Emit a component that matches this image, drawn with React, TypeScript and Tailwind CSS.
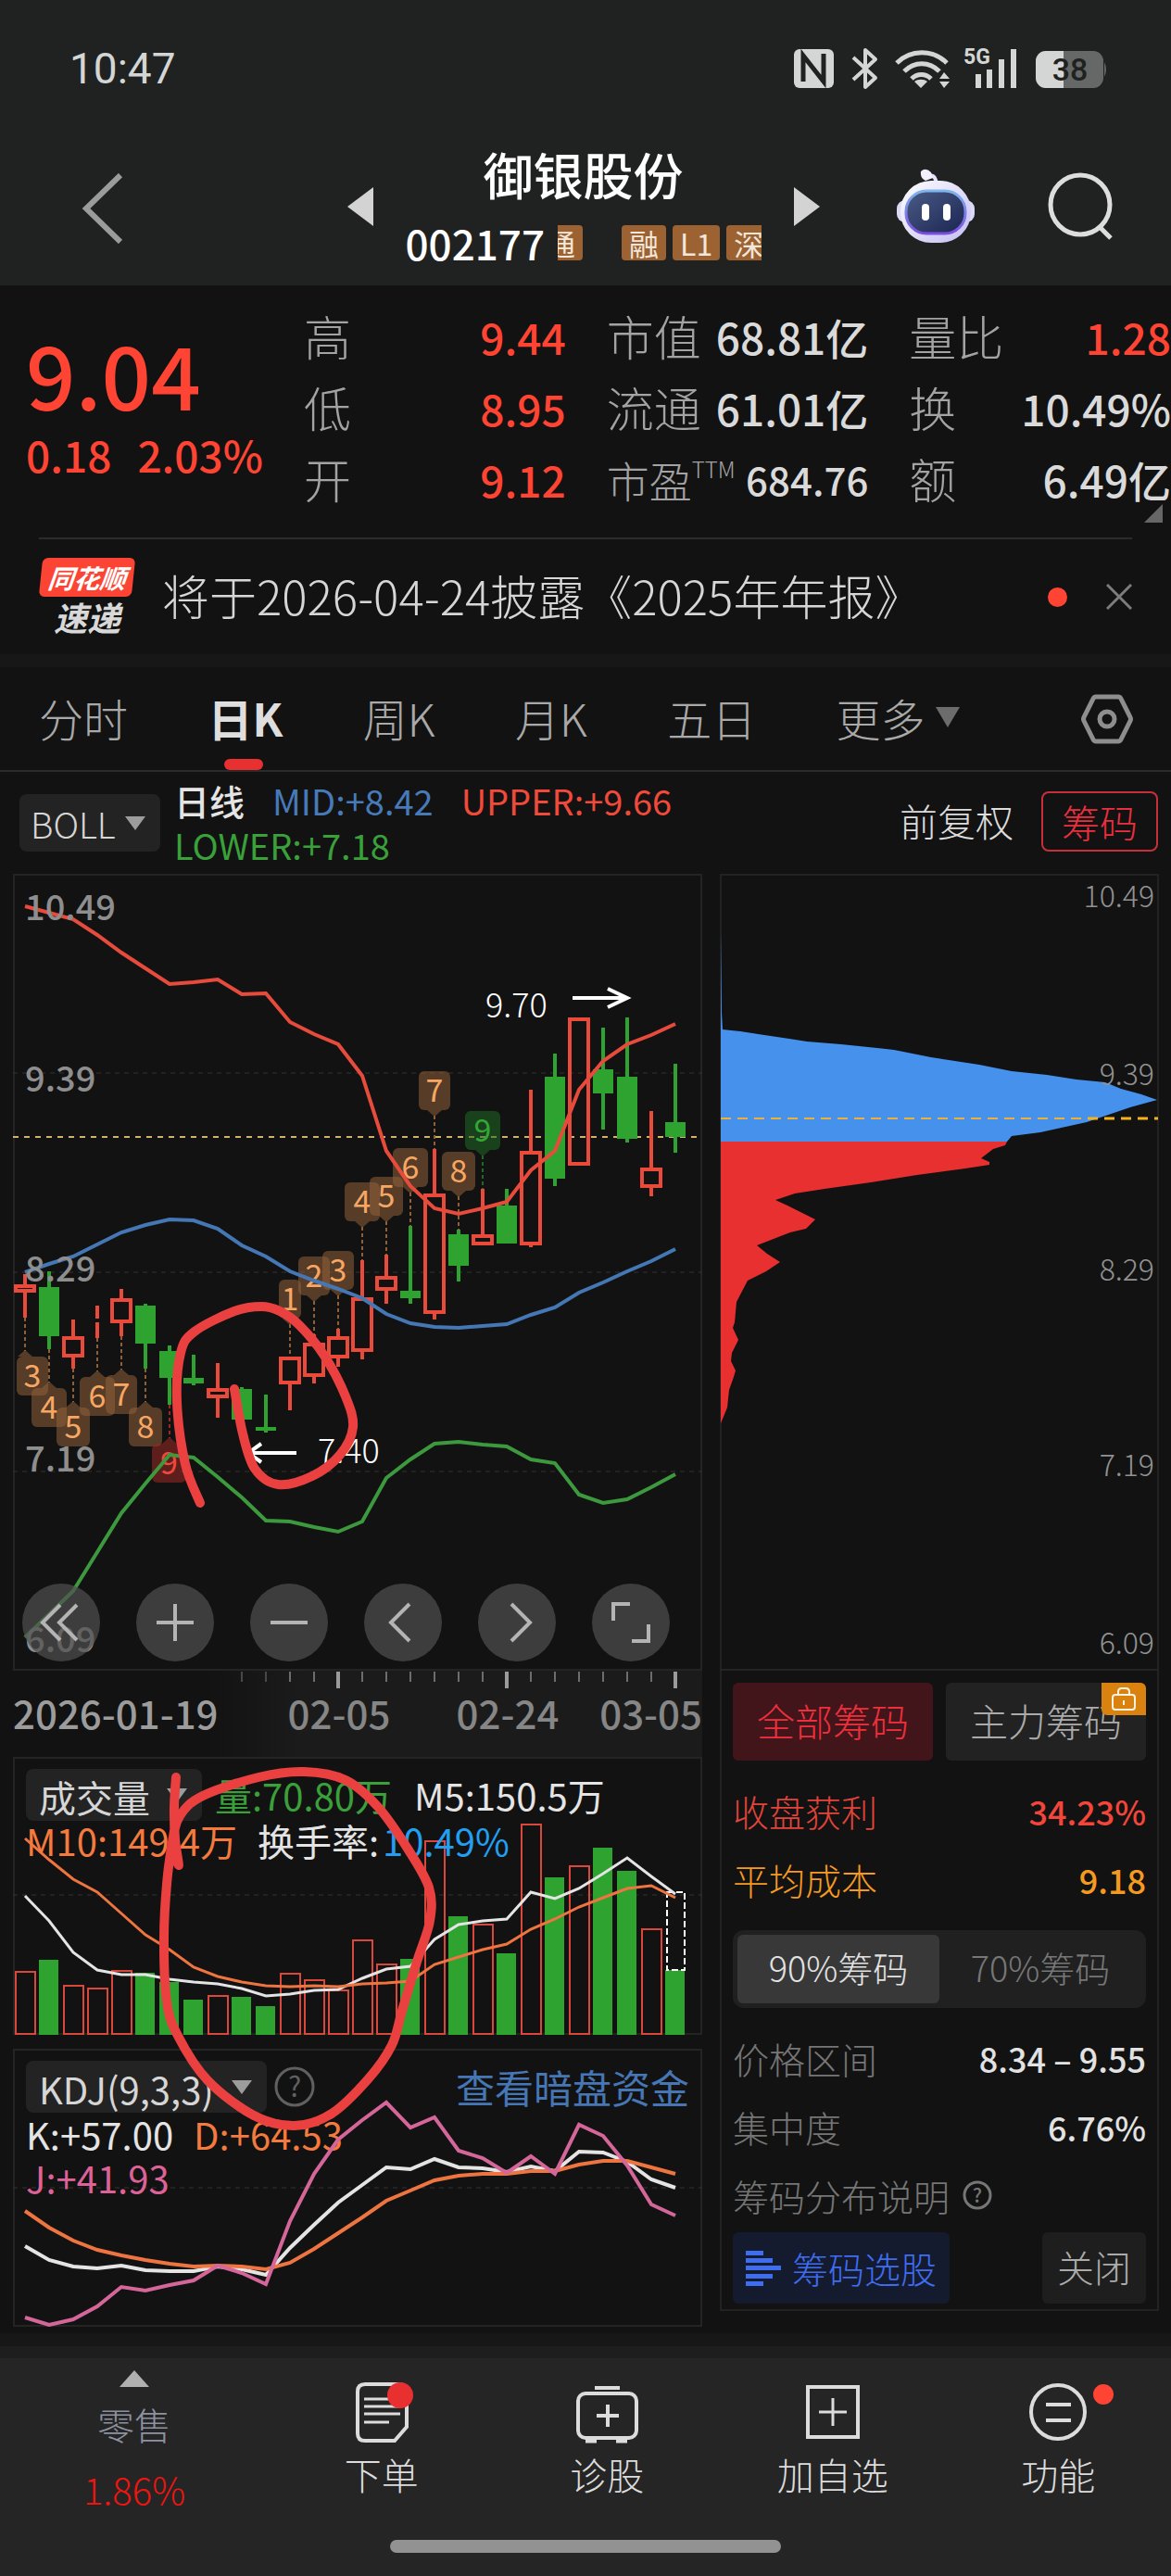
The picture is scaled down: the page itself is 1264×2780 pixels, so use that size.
import React from "react";

type Candle = [up: boolean, high: number, top: number, bottom: number, low: number];

const x0 = 27;
const step = 26;
const cx = (i: number) => x0 + i * step;

const UP = "#ea4a3a";
const DOWN = "#2fa32f";

const candles: Candle[] = [
  [true, 1375, 1386, 1395, 1422],
  [false, 1372, 1389, 1442, 1456],
  [true, 1424, 1442, 1465, 1477],
  [true, 1409, 1423, 1427, 1444],
  [true, 1391, 1401, 1428, 1442],
  [false, 1407, 1409, 1450, 1477],
  [false, 1452, 1458, 1487, 1516],
  [false, 1462, 1487, 1493, 1495],
  [true, 1471, 1498, 1509, 1530],
  [false, 1497, 1499, 1532, 1532],
  [false, 1505, 1540, 1544, 1546],
  [true, 1464, 1464, 1494, 1522],
  [true, 1440, 1449, 1486, 1493],
  [true, 1434, 1442, 1466, 1475],
  [true, 1360, 1400, 1459, 1467],
  [true, 1354, 1377, 1393, 1407],
  [false, 1323, 1393, 1401, 1407],
  [true, 1240, 1288, 1418, 1424],
  [false, 1327, 1332, 1366, 1383],
  [true, 1283, 1332, 1344, 1344],
  [false, 1283, 1301, 1342, 1342],
  [true, 1176, 1242, 1344, 1346],
  [false, 1137, 1162, 1272, 1280],
  [true, 1098, 1098, 1258, 1258],
  [false, 1109, 1154, 1180, 1219],
  [false, 1098, 1162, 1229, 1233],
  [true, 1199, 1260, 1282, 1291],
  [false, 1148, 1211, 1227, 1244],
];

const upper = [978, 985, 992, 1009, 1028, 1045, 1062, 1060, 1057, 1073, 1072, 1103, 1116, 1127, 1161, 1242, 1280, 1304, 1310, 1304, 1297, 1263, 1242, 1176, 1145, 1127, 1117, 1105];
const mid = [1373, 1364, 1356, 1343, 1330, 1322, 1316, 1317, 1326, 1344, 1356, 1372, 1382, 1391, 1401, 1418, 1428, 1432, 1433, 1431, 1429, 1419, 1411, 1395, 1384, 1372, 1361, 1348];
const lower = [1767, 1742, 1717, 1675, 1633, 1601, 1570, 1573, 1594, 1616, 1641, 1642, 1648, 1653, 1642, 1595, 1575, 1558, 1556, 1559, 1561, 1575, 1579, 1613, 1622, 1618, 1605, 1591];

const volumeTops = [2127, 2115, 2142, 2145, 2126, 2129, 2139, 2158, 2153, 2155, 2165, 2129, 2136, 2147, 2093, 2119, 2114, 1986, 2068, 2076, 2108, 1968, 2026, 2013, 1994, 2019, 2081, 2126];
const ma5 = [2046, 2073, 2107, 2126, 2131, 2131, 2136, 2139, 2141, 2146, 2154, 2152, 2148, 2147, 2135, 2125, 2122, 2093, 2077, 2073, 2071, 2042, 2049, 2038, 2022, 2005, 2025, 2044];
const ma10 = [1984, 2007, 2028, 2042, 2065, 2088, 2104, 2123, 2133, 2139, 2143, 2144, 2143, 2144, 2141, 2140, 2138, 2120, 2112, 2104, 2098, 2082, 2071, 2058, 2048, 2038, 2035, 2048];

const lineK = [2424, 2439, 2446, 2448, 2445, 2450, 2451, 2451, 2446, 2449, 2455, 2426, 2401, 2377, 2358, 2339, 2341, 2330, 2339, 2340, 2344, 2338, 2343, 2322, 2323, 2333, 2352, 2361];
const lineD = [2386, 2404, 2418, 2428, 2434, 2439, 2443, 2446, 2445, 2446, 2449, 2442, 2427, 2410, 2393, 2375, 2364, 2353, 2348, 2346, 2346, 2343, 2343, 2336, 2332, 2332, 2339, 2346];
const lineJ = [2501, 2509, 2503, 2489, 2468, 2472, 2466, 2461, 2445, 2453, 2465, 2397, 2346, 2309, 2288, 2269, 2296, 2285, 2321, 2329, 2345, 2327, 2346, 2293, 2305, 2337, 2379, 2391];

const BROWN = { fill: "#8f6038", ink: "#f7a763" };
const GREEN = { fill: "#1f6a24", ink: "#33a636" };
const RED = { fill: "#9a2824", ink: "#f0483a" };

const topTags = [
  { n: 1, i: 11, l: 301, r: 325, y: 1381, c: BROWN },
  { n: 2, i: 12, l: 322, r: 356, y: 1356, c: BROWN },
  { n: 3, i: 13, l: 348, r: 382, y: 1350, c: BROWN },
  { n: 4, i: 14, l: 372, r: 410, y: 1276, c: BROWN },
  { n: 5, i: 15, l: 399, r: 435, y: 1270, c: BROWN },
  { n: 6, i: 16, l: 424, r: 462, y: 1239, c: BROWN },
  { n: 7, i: 17, l: 452, r: 486, y: 1156, c: BROWN },
  { n: 8, i: 18, l: 477, r: 513, y: 1243, c: BROWN },
  { n: 9, i: 19, l: 502, r: 540, y: 1199, c: GREEN },
];

const bottomTags = [
  { n: 3, i: 0, l: 18, r: 52, y: 1464, c: BROWN },
  { n: 4, i: 1, l: 34, r: 72, y: 1498, c: BROWN },
  { n: 5, i: 2, l: 61, r: 97, y: 1519, c: BROWN },
  { n: 6, i: 3, l: 86, r: 124, y: 1486, c: BROWN },
  { n: 7, i: 4, l: 114, r: 148, y: 1484, c: BROWN },
  { n: 8, i: 5, l: 139, r: 175, y: 1519, c: BROWN },
  { n: 9, i: 6, l: 164, r: 201, y: 1558, c: RED },
];

type Pt = [number, number];

const smallLoop: Pt[] = [[253, 1499], [262, 1547], [275, 1585], [300, 1602], [337, 1593], [367, 1570], [381, 1540], [373, 1507], [350, 1463], [323, 1430], [302, 1415], [282, 1410], [253, 1415], [210, 1437], [195, 1460], [191, 1513], [200, 1580], [216, 1622]];
const bigLoop: Pt[] = [[190, 1918], [188, 1950], [189, 1985], [193, 2013], [187, 1990], [194, 1960], [219, 1938], [279, 1918], [328, 1912], [373, 1921], [408, 1950], [440, 1995], [463, 2037], [464, 2073], [450, 2117], [434, 2170], [423, 2207], [398, 2243], [358, 2281], [318, 2294], [274, 2283], [224, 2245], [192, 2197], [180, 2160], [177, 2090], [181, 2023], [189, 1970]];

function smooth(pts: Pt[]) {
  let d = `M${pts[0][0]} ${pts[0][1]}`;
  for (let i = 0; i < pts.length - 1; i++) {
    const a = pts[Math.max(0, i - 1)];
    const b = pts[i];
    const c = pts[i + 1];
    const e = pts[Math.min(pts.length - 1, i + 2)];
    d += ` C${b[0] + (c[0] - a[0]) / 6} ${b[1] + (c[1] - a[1]) / 6} ${c[0] - (e[0] - b[0]) / 6} ${c[1] - (e[1] - b[1]) / 6} ${c[0]} ${c[1]}`;
  }
  return d;
}

function Line({ ys, color, width = 4 }: { ys: number[]; color: string; width?: number }) {
  return <polyline points={ys.map((y, i) => `${cx(i)},${y}`).join(" ")} fill="none" stroke={color} strokeWidth={width} />;
}

function Grid({ y }: { y: number }) {
  return <line x1="14" x2="758" y1={y} y2={y} stroke="#333" strokeWidth="1" strokeDasharray="5 5" />;
}

function Caret({ className = "" }: { className?: string }) {
  return (
    <svg viewBox="0 0 22 15" className={`h-[15px] w-[22px] ${className}`} aria-hidden="true">
      <path d="M0 0h22L11 15z" fill="#9c9c9c" />
    </svg>
  );
}

function Picker({ label, options, className }: { label: string; options: string[]; className: string }) {
  return (
    <div className="relative flex shrink-0 items-center">
      <select aria-label={label} className={`appearance-none rounded-lg bg-[#232323] pr-10 text-[#d6d6d6] ${className}`}>
        {options.map((o) => (
          <option key={o}>{o}</option>
        ))}
      </select>
      <Caret className="pointer-events-none absolute right-4" />
    </div>
  );
}

function StatusBar() {
  return (
    <div className="flex h-[146px] items-center justify-between pt-[2px] pr-[66px] pl-[75px] text-[#d4d6d5]">
      <span className="font-[Roboto] text-[46px] leading-none">10:47</span>
      <svg viewBox="850 48 345 52" className="h-[52px] w-[345px]" role="img" aria-label="NFC 蓝牙 Wi-Fi 5G 电量38">
        <rect x="854" y="53" width="43" height="42" rx="6" fill="#d4d6d5" />
        <path d="M864 88V60l22 28V58" fill="none" stroke="#202221" strokeWidth="5" />
        <path d="M918 62l24 22-11 10V54l11 10-24 22" fill="none" stroke="#d4d6d5" strokeWidth="4" strokeLinejoin="round" />
        <g fill="none" stroke="#d4d6d5" strokeWidth="5">
          <path d="M965 68c15-15 39-15 54 0" />
          <path d="M973 77c11-11 27-11 38 0" />
          <path d="M981 85c6-6 15-6 21 0" />
        </g>
        <path d="M984 88c4-3 10-3 14 0l-7 7z" fill="#d4d6d5" />
        <path d="M1011 85l5-7 6 7zM1011 88l5 7 6-7z" fill="#d4d6d5" />
        <text x="1037" y="69" fontFamily="Roboto" fontWeight="700" fontSize="23" fill="#d4d6d5">5G</text>
        <path d="M1050 80h6v15h-6zM1062 75h6v20h-6zM1075 64h6v31h-6zM1088 53h6v42h-6z" fill="#d4d6d5" />
        <clipPath id="batt">
          <rect x="1115" y="55" width="73" height="40" rx="11" />
        </clipPath>
        <g clipPath="url(#batt)">
          <rect x="1115" y="55" width="73" height="40" fill="#666867" />
          <rect x="1115" y="55" width="30" height="40" fill="#d4d6d5" />
        </g>
        <path d="M1189 67q4 8 0 16z" fill="#666867" />
        <text x="1152" y="87" textAnchor="middle" fontFamily="Roboto" fontWeight="500" fontSize="34" fill="#202221">38</text>
      </svg>
    </div>
  );
}

function Robot() {
  return (
    <svg viewBox="0 0 88 82" className="h-[82px] w-[88px]" aria-hidden="true">
      <defs>
        <linearGradient id="shell" x1="0" y1="0" x2="1" y2="1">
          <stop offset="0" stopColor="#ffffff" />
          <stop offset="1" stopColor="#c3bdf2" />
        </linearGradient>
        <linearGradient id="visor" x1="0" y1="0" x2="1" y2="1">
          <stop offset="0" stopColor="#4a5c86" />
          <stop offset="1" stopColor="#1b2450" />
        </linearGradient>
        <linearGradient id="rim" x1="0" y1="0" x2="0" y2="1">
          <stop offset="0" stopColor="#7fb6ee" />
          <stop offset="1" stopColor="#7a4de0" />
        </linearGradient>
      </defs>
      <path d="M44 16q1-8-6-9" fill="none" stroke="#e4e2fa" strokeWidth="4" />
      <path d="M28 3q5-5 11 1l2 6-8 3q-6-3-5-10z" fill="#f1f0fc" />
      <rect x="2" y="34" width="84" height="24" rx="9" fill="#dcd9f7" />
      <rect x="6" y="13" width="76" height="67" rx="33" fill="url(#shell)" />
      <rect x="12" y="24" width="64" height="46" rx="22" fill="url(#visor)" stroke="url(#rim)" strokeWidth="3" />
      <rect x="29" y="38" width="8" height="18" rx="4" fill="#fff" />
      <rect x="52" y="38" width="8" height="18" rx="4" fill="#fff" />
    </svg>
  );
}

function Badge({ children }: { children: React.ReactNode }) {
  return <span className="flex h-[38px] shrink-0 items-center justify-center rounded-sm bg-[#9c6232] px-2 text-[32px] leading-none text-[#f3e6da]">{children}</span>;
}

function Header() {
  return (
    <header className="bg-[#202221]">
      <StatusBar />
      <div className="flex h-[162px] items-start pr-[60px] pl-[88px]">
        <button aria-label="返回" className="mt-[41px]">
          <svg viewBox="0 0 46 76" className="h-[76px] w-[46px]">
            <path d="M42 2L5 38l37 36" fill="none" stroke="#9a9b9a" strokeWidth="6" />
          </svg>
        </button>
        <div className="flex flex-1 items-center justify-center pl-[160px] pr-[1px]">
          <button aria-label="上一只">
            <svg viewBox="0 0 28 42" className="h-[42px] w-7"><path d="M28 0v42L0 21z" fill="#d2d3d2" /></svg>
          </button>
          <div className="flex w-[454px] flex-col items-center pt-[6px]">
            <h1 className="text-[54px] leading-[72px] font-medium text-white">御银股份</h1>
            <div className="flex w-[384px] items-center gap-[14px]">
              <span className="text-[44px] leading-[76px] font-medium text-white">002177</span>
              <div className="flex min-w-0 flex-1 items-center overflow-hidden">
                <div className="flex w-[27px] shrink-0 justify-end overflow-hidden"><Badge>通</Badge></div>
                <div className="ml-[42px] flex min-w-0 flex-1 gap-[7px] overflow-hidden">
                  <Badge>融</Badge>
                  <Badge>L1</Badge>
                  <Badge>深</Badge>
                </div>
              </div>
            </div>
          </div>
          <button aria-label="下一只">
            <svg viewBox="0 0 28 42" className="h-[42px] w-7"><path d="M0 0v42l28-21z" fill="#d2d3d2" /></svg>
          </button>
        </div>
        <div className="mt-[36px] flex items-center gap-[76px]">
          <button aria-label="智能助手"><Robot /></button>
          <button aria-label="搜索">
            <svg viewBox="0 0 74 76" className="h-[76px] w-[74px]">
              <circle cx="36" cy="36" r="32" fill="none" stroke="#dcdddc" strokeWidth="5" />
              <path d="M57 60l12 12" stroke="#dcdddc" strokeWidth="5" />
            </svg>
          </button>
        </div>
      </div>
    </header>
  );
}

function Stat({ label, value, red = false, small = false }: { label: React.ReactNode; value: string; red?: boolean; small?: boolean }) {
  return (
    <div className="flex h-[77px] items-center justify-between whitespace-nowrap">
      <dt className="text-[51px] leading-none font-light text-[#a3a3a3]">{label}</dt>
      <dd className={`leading-none font-medium ${small ? "text-[42px]" : "text-[46px]"} ${red ? "text-[#ff4433]" : "text-[#dadada]"}`}>{value}</dd>
    </div>
  );
}

function Quote() {
  return (
    <section className="relative grid grid-cols-[256px_1fr_1fr_1fr] gap-x-11 pt-4 pb-[25px] pl-[28px]">
      <div className="pt-[30px] font-medium whitespace-nowrap text-[#ff4433]">
        <div className="text-[94px] leading-[96px]">9.04</div>
        <div className="flex gap-7 pt-[17px] text-[46px] leading-[46px]">
          <span>0.18</span>
          <span>2.03%</span>
        </div>
      </div>
      <dl>
        <Stat label="高" value="9.44" red />
        <Stat label="低" value="8.95" red />
        <Stat label="开" value="9.12" red />
      </dl>
      <dl>
        <Stat label="市值" value="68.81亿" />
        <Stat label="流通" value="61.01亿" />
        <Stat label={<span className="flex items-start text-[46px]">市盈<span className="text-[24px] leading-none">TTM</span></span>} value="684.76" small />
      </dl>
      <dl>
        <Stat label="量比" value="1.28" red />
        <Stat label="换" value="10.49%" />
        <Stat label="额" value="6.49亿" />
      </dl>
      <svg viewBox="0 0 20 20" className="absolute right-[9px] bottom-[16px] size-5" aria-hidden="true"><path d="M20 0v20H0z" fill="#666" /></svg>
    </section>
  );
}

function News() {
  return (
    <section className="mx-[42px] flex h-[126px] items-center border-t-2 border-[#2b2b2b]">
      <div className="flex w-[104px] flex-col items-center italic">
        <div className="-skew-x-6 rounded-md bg-[#fb4434] px-2 text-[28px] leading-[42px] font-bold text-white">同花顺</div>
        <div className="text-[36px] leading-[42px] font-bold text-[#d8d8d8]">速递</div>
      </div>
      <a href="#report" className="flex-1 pb-1 pl-[29px] text-[51px] leading-none font-light whitespace-nowrap text-[#d6d6d6]">将于2026-04-24披露《2025年年报》</a>
      <span className="mr-[42px] size-[21px] rounded-full bg-[#ff4433]" />
      <button aria-label="关闭公告">
        <svg viewBox="0 0 28 28" className="size-7"><path d="M1 1l26 26M27 1L1 27" stroke="#7c7c7c" strokeWidth="3" /></svg>
      </button>
    </section>
  );
}

function Tabs() {
  const tab = "relative flex h-full items-center pb-1";
  return (
    <nav className="flex h-[113px] items-center justify-between border-b-2 border-[#2b2b2b] pr-[40px] pl-[42px] text-[48px] leading-none font-light text-[#a9a9a9]">
      <button className={tab}>分时</button>
      <button className={`${tab} font-bold text-[#dedede]`}>
        日K
        <span className="absolute bottom-0 left-[18px] h-3 w-[42px] rounded-full bg-[#e83030]" />
      </button>
      <button className={tab}>周K</button>
      <button className={tab}>月K</button>
      <button className={tab}>五日</button>
      <button className={`${tab} gap-[11px]`}>
        更多
        <svg viewBox="0 0 26 22" className="h-[22px] w-[26px]"><path d="M0 0h26L13 22z" fill="#6c6c6c" /></svg>
      </button>
      <button aria-label="设置" className="ml-[44px]">
        <svg viewBox="0 0 58 56" className="h-14 w-[58px]" fill="none" stroke="#8e8e8e" strokeWidth="5">
          <path d="M17 4h24q2 0 3 2l10 20q1 2 0 4L44 50q-1 2-3 2H17q-2 0-3-2L4 30q-1-2 0-4L14 6q1-2 3-2z" />
          <circle cx="29" cy="28" r="8" />
        </svg>
      </button>
    </nav>
  );
}

function IndicatorBar() {
  return (
    <div className="flex h-[110px] items-center pr-[14px] pl-[21px] text-[38px]">
      <Picker label="主图指标" options={["BOLL", "MA"]} className="h-[62px] w-[152px] pl-3 text-[38px] font-light" />
      <div className="flex flex-1 flex-wrap content-center gap-x-[30px] pr-[200px] pl-[15px] leading-[48px]">
        <span className="font-medium text-[#e4e4e4]">日线</span>
        <span className="text-[#477ab8]">MID:+8.42</span>
        <span className="text-[#f04a3a]">UPPER:+9.66</span>
        <span className="text-[#3aa03a]">LOWER:+7.18</span>
      </div>
      <button className="pr-[30px] pb-1 text-[41px] font-light whitespace-nowrap text-[#dcdcdc]">前复权</button>
      <button className="mb-1 h-[65px] rounded-lg border-2 border-[#c92f3a] px-5 text-[41px] leading-none font-light whitespace-nowrap text-[#ea2f3e]">筹码</button>
    </div>
  );
}

function Tag({ n, i, l, r, y, c, up }: { n: number; i: number; l: number; r: number; y: number; c: { fill: string; ink: string }; up: boolean }) {
  const x = cx(i);
  const [, high, , , low] = candles[i];
  return (
    <g>
      <path
        d={up ? `M${x} ${y + 48}V${high}` : `M${x} ${low}V${y - 6}`}
        stroke={c.fill}
        strokeWidth="2"
        strokeDasharray="4 3"
      />
      <rect x={l} y={y} width={r - l} height="42" rx="6" fill={c.fill} fillOpacity="0.55" />
      <path d={up ? `M${x - 8} ${y + 42}h16l-8 7z` : `M${x - 8} ${y}h16l-8 -7z`} fill={c.fill} fillOpacity="0.55" />
      <text x={(l + r) / 2} y={y + 33} textAnchor="middle" fontSize="34" fill={c.ink}>{n}</text>
    </g>
  );
}

function RoundButton({ label, d }: { label: string; d: string }) {
  return (
    <button aria-label={label} className="size-[84px] rounded-full bg-[#505050]/70">
      <svg viewBox="0 0 84 84" className="size-full"><path d={d} fill="none" stroke="#b4b4b4" strokeWidth="4" /></svg>
    </button>
  );
}

function PriceChart() {
  return (
    <div className="relative">
      <svg viewBox="14 943 744 860" className="block w-full" role="img" aria-label="日K线与布林线">
        <rect x="15" y="944" width="742" height="858" fill="none" stroke="#242424" strokeWidth="2" />
        <Grid y={1158} />
        <Grid y={1373} />
        <Grid y={1588} />
        <line x1="14" x2="758" y1="1227" y2="1227" stroke="#d3b06c" strokeWidth="2" strokeDasharray="6 6" />
        {candles.map(([isUp, high, top, bottom, low], i) =>
          isUp ? (
            <g key={i} stroke={UP} strokeWidth="4" fill="none">
              <path d={`M${cx(i)} ${high}V${top}M${cx(i)} ${bottom}V${low}`} />
              <rect x={cx(i) - 10} y={top + 2} width="20" height={Math.max(0, bottom - top - 4)} />
            </g>
          ) : (
            <g key={i} fill={DOWN}>
              <rect x={cx(i) - 2} y={high} width="4" height={low - high} />
              <rect x={cx(i) - 11} y={top} width="22" height={bottom - top} />
            </g>
          ),
        )}
        {topTags.map((t) => <Tag key={t.n} {...t} up />)}
        {bottomTags.map((t) => <Tag key={t.n} {...t} up={false} />)}
        <Line ys={upper} color="#e64b3c" />
        <Line ys={mid} color="#4477b3" />
        <Line ys={lower} color="#3d993d" />
        <g fontSize="38" fontWeight="500" fill="#8e8e8e">
          <text x="27" y="993">10.49</text>
          <text x="27" y="1178">9.39</text>
          <text x="27" y="1383">8.29</text>
          <text x="27" y="1588">7.19</text>
          <text x="27" y="1783">6.09</text>
        </g>
        <g fontSize="36" fontWeight="300" fill="#fff">
          <text x="524" y="1098">9.70</text>
          <text x="343" y="1579">7.40</text>
        </g>
        <path d="M618 1077h57M656 1067l21 10-21 10M320 1568h-51M282 1558l-14 10 14 10" fill="none" stroke="#fff" strokeWidth="4" />
      </svg>
      <div className="absolute inset-x-0 bottom-[10px] flex gap-[39px] pl-[10px]">
        <RoundButton label="最早" d="M41 23L22 42l19 19M59 23L40 42l19 19" />
        <RoundButton label="放大" d="M42 22v40M22 42h40" />
        <RoundButton label="缩小" d="M22 42h40" />
        <RoundButton label="前移" d="M49 22L29 42l20 20" />
        <RoundButton label="后移" d="M36 22l20 20-20 20" />
        <RoundButton label="全屏" d="M23 40V22h18M61 44v18H43" />
      </div>
    </div>
  );
}

function DateAxis() {
  return (
    <svg viewBox="14 1803 744 93" className="block w-full" role="img" aria-label="日期轴">
      <defs>
        <linearGradient id="fade" x1="0" x2="1">
          <stop offset="28%" stopColor="#121212" />
          <stop offset="42%" stopColor="#1b1b1b" />
        </linearGradient>
      </defs>
      <rect x="14" y="1803" width="744" height="93" fill="url(#fade)" />
      {Array.from({ length: 19 }, (_, k) => k + 9).map((i) => {
        const big = i % 7 === 6;
        return <rect key={i} x={cx(i) - (big ? 2 : 1)} y="1804" width={big ? 4 : 2} height={big ? 18 : 11} fill={big ? "#9a9a9a" : i < 11 ? "#484848" : "#6c6c6c"} />;
      })}
      <g fontSize="42" fontWeight="500" fill="#868686">
        <text x="14" y="1866" fill="#9c9c9c">2026-01-19</text>
        <text x="366" y="1866" textAnchor="middle">02-05</text>
        <text x="548" y="1866" textAnchor="middle">02-24</text>
        <text x="758" y="1866" textAnchor="end">03-05</text>
      </g>
    </svg>
  );
}

function VolumeChart() {
  const base = 2196;
  return (
    <div className="relative">
      <svg viewBox="14 1896 744 300" className="block w-full" role="img" aria-label="成交量">
        <rect x="15" y="1897" width="742" height="298" fill="none" stroke="#242424" strokeWidth="2" />
        <Grid y={2045} />
        {volumeTops.map((y, i) =>
          candles[i][0] ? (
            <rect key={i} x={cx(i) - 10} y={y + 1} width="21" height={base - y - 2} fill="none" stroke="#d9483a" strokeWidth="2" />
          ) : (
            <rect key={i} x={cx(i) - 11} y={y} width="21" height={base - y} fill={DOWN} />
          ),
        )}
        <rect x="720" y="2042" width="19" height="84" fill="none" stroke="#fff" strokeWidth="2" strokeDasharray="7 3" />
        <Line ys={ma5} color="#e4e4e4" width={3} />
        <Line ys={ma10} color="#ee7440" width={3} />
      </svg>
      <div className="absolute inset-x-0 top-[13px] px-[14px] text-[40px]">
        <div className="flex h-14 items-center gap-[14px]">
          <Picker label="副图指标一" options={["成交量", "成交额"]} className="h-14 w-[190px] pl-[14px]" />
          <div className="flex gap-[24px] leading-none">
            <span className="text-[#3aa03a]">量:70.80万</span>
            <span className="text-[#e4e4e4]">M5:150.5万</span>
          </div>
        </div>
        <div className="flex gap-[22px] leading-[42px]">
          <span className="text-[#f47a3e]">M10:149.4万</span>
          <span className="text-[#e4e4e4]">换手率:<span className="pl-1 text-[#229ff0]">10.49%</span></span>
        </div>
      </div>
    </div>
  );
}

function KdjChart() {
  return (
    <div className="relative mt-[15px]">
      <svg viewBox="14 2211 744 300" className="block w-full" role="img" aria-label="KDJ">
        <rect x="15" y="2212" width="742" height="298" fill="none" stroke="#242424" strokeWidth="2" />
        <Grid y={2361} />
      </svg>
      <div className="absolute inset-x-0 top-[13px] px-[14px] text-[40px]">
        <div className="flex h-14 items-center">
          <Picker label="副图指标二" options={["KDJ(9,3,3)", "MACD(12,26,9)"]} className="h-14 w-[260px] pl-[14px]" />
          <button aria-label="指标说明" className="ml-2">
            <svg viewBox="0 0 44 44" className="size-11">
              <circle cx="22" cy="22" r="20" fill="none" stroke="#606060" strokeWidth="3" />
              <text x="22" y="33" textAnchor="middle" fontSize="30" fill="#606060">?</text>
            </svg>
          </button>
          <a href="#funds" className="ml-auto text-[42px] leading-none text-[#4676b4]">查看暗盘资金</a>
        </div>
        <div className="flex flex-wrap gap-x-[22px] pr-[340px] leading-[47px] whitespace-nowrap">
          <span className="text-[#e4e4e4]">K:+57.00</span>
          <span className="text-[#f47a3e]">D:+64.53</span>
          <span className="text-[#dd6298]">J:+41.93</span>
        </div>
      </div>
      <svg viewBox="14 2211 744 300" className="pointer-events-none absolute inset-0 w-full" aria-hidden="true">
        <Line ys={lineK} color="#e4e4e4" />
        <Line ys={lineD} color="#ee7440" />
        <Line ys={lineJ} color="#d4669a" />
      </svg>
    </div>
  );
}

function Ink() {
  return (
    <svg viewBox="14 943 744 1568" className="pointer-events-none absolute inset-x-0 top-0 w-full" aria-hidden="true">
      <g fill="none" stroke="#ea4040" strokeWidth="10" strokeLinecap="round" strokeLinejoin="round">
        <path d={smooth(smallLoop)} />
        <path d={smooth(bigLoop)} />
      </g>
    </svg>
  );
}

function ChipProfile() {
  return (
    <svg viewBox="777 943 474 860" className="block w-full" role="img" aria-label="筹码分布">
      <path d="M777 1802h474" stroke="#242424" strokeWidth="2" />
      <path d="M778 1005L779 1093L780 1111L799 1113L825 1117L852 1121L871 1124L908 1127L947 1131L965 1133L1005 1141L1057 1149L1092 1156L1130 1160L1162 1165L1193 1168L1210 1175L1232 1181L1249 1187L1220 1195L1173 1211L1123 1222L1092 1226L1087 1232H778z" fill="#4691ec" />
      <path d="M778 1232H1087L1085 1236L1072 1240L1059 1250L1068 1254L1068 1257L1042 1261L990 1268L940 1276L890 1283L858 1288L837 1295L850 1301L880 1316L870 1326L853 1330L817 1344L828 1353L842 1362L827 1372L807 1382L795 1405L793 1427L791 1433L797 1446L790 1460L789 1469L794 1479L792 1486L787 1500L785 1519L778 1536z" fill="#e83030" />
      <g fontSize="32" fontWeight="300" fill="#929292" textAnchor="end">
        <text x="1246" y="979">10.49</text>
        <text x="1246" y="1171">9.39</text>
        <text x="1246" y="1382">8.29</text>
        <text x="1246" y="1593">7.19</text>
        <text x="1246" y="1785">6.09</text>
      </g>
      <path d="M778 1207h396" stroke="#e9b13c" strokeWidth="2" strokeDasharray="11 7" />
      <path d="M1174 1207h76" stroke="#f5b41e" strokeWidth="3" strokeDasharray="11 7" />
    </svg>
  );
}

function InfoRow({ label, value, tone, valueTone }: { label: string; value: string; tone: string; valueTone: string }) {
  return (
    <div className="flex h-[74px] items-center justify-between whitespace-nowrap">
      <dt className={`text-[39px] leading-none font-light ${tone}`}>{label}</dt>
      <dd className={`text-[36px] leading-none font-medium ${valueTone}`}>{value}</dd>
    </div>
  );
}

function ChipPanel() {
  return (
    <aside className="flex min-w-0 flex-[470] flex-col self-start border-2 border-[#222]">
      <div className="-mx-[2px] -mt-[2px]">
        <ChipProfile />
      </div>
      <div className="px-[12px] pt-[13px] pb-[6px]">
        <div className="flex gap-[14px] text-[41px] leading-none font-light">
          <button className="h-[84px] flex-1 rounded-md bg-[#42151a] pb-1 whitespace-nowrap text-[#ee2f3c]">全部筹码</button>
          <button className="relative h-[84px] flex-1 overflow-hidden rounded-md bg-[#222] pb-1 whitespace-nowrap text-[#ababab]">
            主力筹码
            <span className="absolute top-0 right-0 flex h-[35px] w-12 items-center justify-center rounded-bl-md bg-[#d9820f]">
              <svg viewBox="0 0 28 28" className="size-7" fill="none" stroke="#fff3df" strokeWidth="2" aria-hidden="true">
                <rect x="2" y="9" width="24" height="16" rx="3" />
                <path d="M8 9V6q0-4 4-4h4q4 0 4 4v3M14 15v5" />
              </svg>
            </span>
          </button>
        </div>
        <dl className="pt-[17px]">
          <InfoRow label="收盘获利" value="34.23%" tone="text-[#e0443a]" valueTone="text-[#f2463a]" />
          <InfoRow label="平均成本" value="9.18" tone="text-[#f59a20]" valueTone="text-[#f59a20]" />
        </dl>
        <div className="mt-[18px] flex h-[84px] rounded-xl bg-[#202020] p-[5px] text-[38px] leading-none font-light">
          <button className="flex-1 rounded-md bg-[#383838] pb-1 whitespace-nowrap text-[#e2e2e2]">90%筹码</button>
          <button className="flex-1 pb-1 whitespace-nowrap text-[#777]">70%筹码</button>
        </div>
        <dl className="pt-[17px]">
          <InfoRow label="价格区间" value="8.34 – 9.55" tone="text-[#767676]" valueTone="text-[#e2e2e2]" />
          <InfoRow label="集中度" value="6.76%" tone="text-[#767676]" valueTone="text-[#e2e2e2]" />
        </dl>
        <button className="flex h-[74px] items-center gap-[14px] text-[39px] leading-none font-light whitespace-nowrap text-[#767676]">
          筹码分布说明
          <svg viewBox="0 0 32 32" className="size-8" aria-hidden="true">
            <circle cx="16" cy="16" r="14" fill="none" stroke="#767676" strokeWidth="3" />
            <text x="16" y="24" textAnchor="middle" fontSize="21" fontWeight="500" fill="#767676">?</text>
          </svg>
        </button>
        <div className="flex items-center justify-between pt-[3px] leading-none font-light whitespace-nowrap">
          <button className="flex h-[77px] items-center gap-3 rounded-md bg-[#141b2e] px-[14px] text-[39px] text-[#3f6df0]">
            <svg viewBox="0 0 38 38" className="size-[38px]" aria-hidden="true">
              <path d="M0 0h19v5H0zM0 8h29v5H0zM0 16h38v5H0zM0 25h29v5H0zM0 33h19v5H0z" fill="#3f6df0" />
            </svg>
            筹码选股
          </button>
          <button className="h-[77px] rounded-md bg-[#1e1e1e] px-4 pb-1 text-[40px] text-[#ababab]">关闭</button>
        </div>
      </div>
    </aside>
  );
}

function NavItem({ label, children }: { label: string; children: React.ReactNode }) {
  return (
    <button className="flex flex-1 flex-col items-center gap-[6px] pt-[22px] text-[40px] leading-[50px] font-light text-[#dcdcdc]">
      {children}
      {label}
    </button>
  );
}

function BottomNav() {
  const icon = "h-[72px] w-[80px] overflow-visible";
  return (
    <footer className="mt-[7px] border-t-[14px] border-[#171717]">
      <div className="h-[13px] bg-[#1e1e1e]" />
      <div className="h-[235px] bg-[#252525]">
        <nav className="flex h-[196px]">
          <button className="flex w-[290px] shrink-0 flex-col items-center pt-[13px] font-light">
            <svg viewBox="0 0 32 18" className="h-[18px] w-8" aria-hidden="true"><path d="M16 0l16 18H0z" fill="#b0b0b0" /></svg>
            <span className="pt-[15px] text-[40px] leading-[50px] text-[#8d92a0]">零售</span>
            <span className="pt-[20px] text-[40px] leading-[50px] text-[#ee1510]">1.86%</span>
          </button>
          <NavItem label="下单">
            <svg viewBox="372 2567 80 72" className={icon} fill="none" stroke="#dcdcdc" strokeWidth="4" aria-hidden="true">
              <path d="M394 2573h36q9 0 9 9v37l-13 15h-32q-8 0-8-8v-45q0-8 8-8z" />
              <path d="M393 2589h27M393 2597h39M393 2605h39M393 2614h27" strokeWidth="3" />
              <circle cx="432" cy="2585" r="14" fill="#e83030" stroke="none" />
            </svg>
          </NavItem>
          <NavItem label="诊股">
            <svg viewBox="615 2567 80 72" className={icon} fill="none" stroke="#dcdcdc" strokeWidth="4" aria-hidden="true">
              <rect x="624" y="2583" width="63" height="48" rx="8" />
              <path d="M642 2577h27M656 2595v24M644 2607h24" />
              <path d="M632 2634h12M665 2634h12" strokeWidth="5" />
            </svg>
          </NavItem>
          <NavItem label="加自选">
            <svg viewBox="858 2567 80 72" className={icon} fill="none" stroke="#dcdcdc" strokeWidth="4" aria-hidden="true">
              <rect x="871" y="2576" width="54" height="54" />
              <path d="M898 2588v30M883 2603h30" strokeWidth="3" />
            </svg>
          </NavItem>
          <NavItem label="功能">
            <svg viewBox="1101 2567 80 72" className={icon} fill="none" stroke="#dcdcdc" strokeWidth="4" aria-hidden="true">
              <circle cx="1141" cy="2603" r="29" />
              <path d="M1128 2595h27M1128 2612h27" />
              <circle cx="1190" cy="2584" r="11" fill="#ff4433" stroke="none" />
            </svg>
          </NavItem>
        </nav>
        <div className="mx-auto h-[14px] w-1/3 rounded-full bg-[#929292]" />
      </div>
    </footer>
  );
}

export default function App() {
  return (
    <div className="overflow-hidden bg-[#121212] font-['Noto_Sans_CJK_SC','Noto_Sans',sans-serif] text-[#dcdcdc]">
      <Header />
      <Quote />
      <News />
      <div className="h-[14px] bg-[#171717]" />
      <Tabs />
      <IndicatorBar />
      <main className="flex items-start gap-[19px] pr-[13px] pl-[14px]">
        <section className="relative min-w-0 flex-[744]">
          <PriceChart />
          <DateAxis />
          <VolumeChart />
          <KdjChart />
          <Ink />
        </section>
        <ChipPanel />
      </main>
      <BottomNav />
    </div>
  );
}
